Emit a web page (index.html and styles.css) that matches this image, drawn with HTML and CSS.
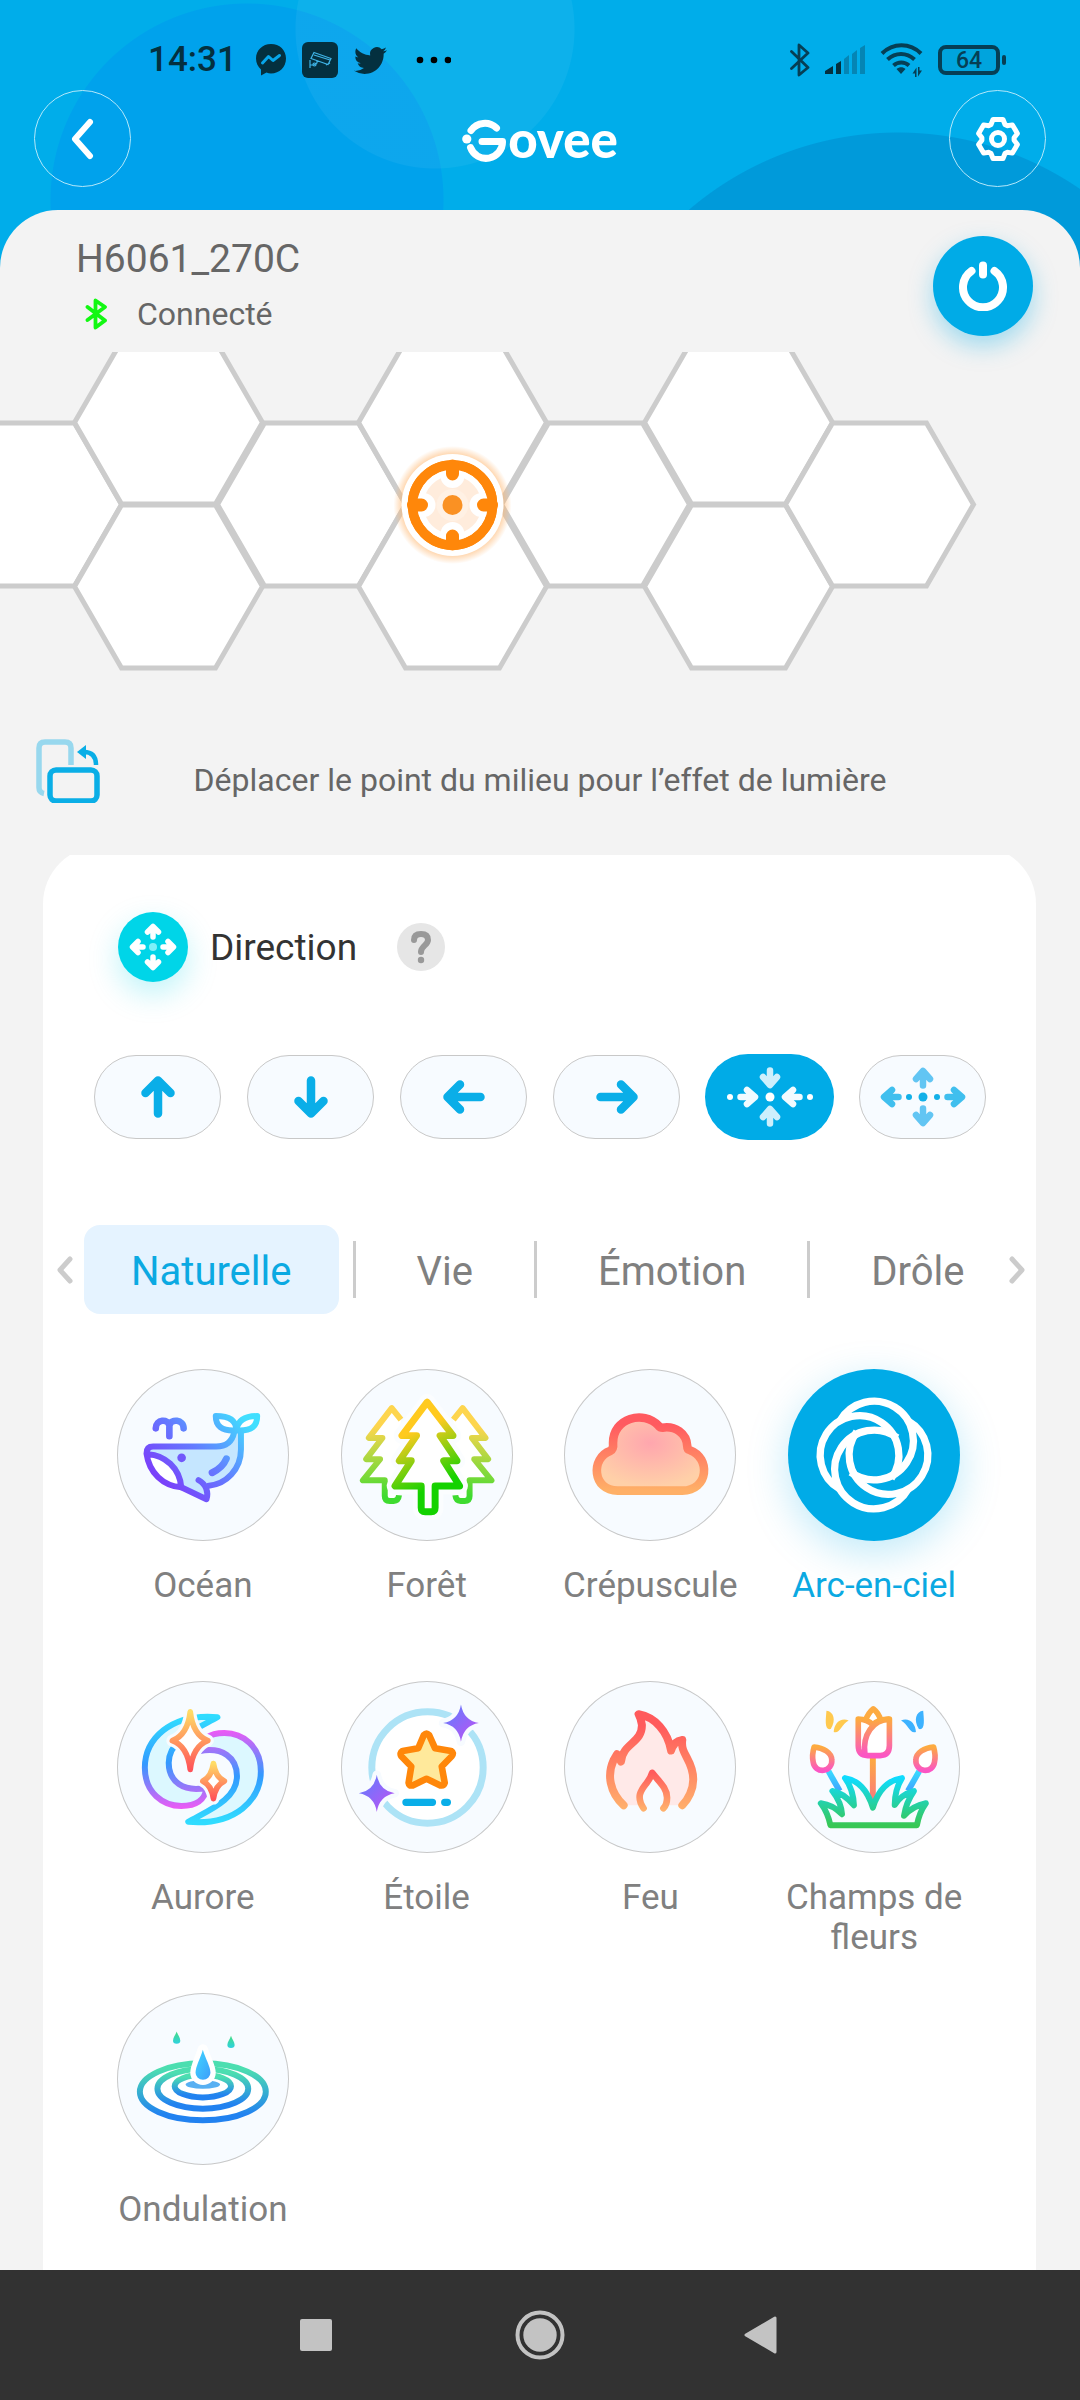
FILE: index.html
```html
<!DOCTYPE html>
<html lang="fr">
<head>
<meta charset="utf-8">
<meta name="viewport" content="width=device-width, initial-scale=1">
<title>Govee – H6061_270C</title>
<link rel="stylesheet" href="styles.css">
</head>
<body>
<div class="app">
  <header class="top">
    <div class="statusbar">
      <div class="status-left">
        <span class="clock">14:31</span>
        <svg width="30" height="32" viewBox="0 0 30 32"><path fill="#04303f" d="M15 0C6.500 0 0 6.300 0 14.500c0 4.500 2 8.300 5 11V31.500l5.500-3A17 17 0 0 0 15 29.500c8.500 0 15-6.500 15-15S23.500 0 15 0z"/><path d="M6.500 19l6-6.500 4.500 4 6.500-5" fill="none" stroke="#07a6ea" stroke-width="3" stroke-linecap="round" stroke-linejoin="round"/></svg>
        <svg width="36" height="36" viewBox="0 0 36 36"><rect width="36" height="36" rx="6" fill="#04303f"/><g fill="none" stroke="#3fb4e6" stroke-width="1.200"><path d="M12 10.500l17 6-3 6-17-6zM12 13l16 5M8 18v8M8 23h4l3-2v-3M24 23l4-2"/><circle cx="12.500" cy="22.500" r="1.500"/></g></svg>
        <svg width="33" height="33" viewBox="0 0 24 24"><path fill="#04303f" d="M23.953 4.570a10 10 0 01-2.825.775 4.958 4.958 0 002.163-2.723c-.951.555-2.005.959-3.127 1.184a4.920 4.920 0 00-8.384 4.482C7.690 8.095 4.067 6.130 1.640 3.162a4.822 4.822 0 00-.666 2.475c0 1.710.870 3.213 2.188 4.096a4.904 4.904 0 01-2.228-.616v.060a4.923 4.923 0 003.946 4.827 4.996 4.996 0 01-2.212.085 4.936 4.936 0 004.604 3.417 9.867 9.867 0 01-6.102 2.105c-.390 0-.779-.023-1.170-.067a13.995 13.995 0 007.557 2.209c9.053 0 13.998-7.496 13.998-13.985 0-.210 0-.420-.015-.630A9.935 9.935 0 0024 4.590z"/></svg>
        <svg class="more" width="36" height="8" viewBox="0 0 36 8"><circle cx="5" cy="4" r="3.300"/><circle cx="19" cy="4" r="3.300"/><circle cx="33" cy="4" r="3.300"/></svg>
      </div>
      <div class="status-right">
        <svg width="20" height="34" viewBox="0 0 20 34"><path d="M1.500 8.500L18 24.500 9 32V2l9 8L1.500 25.500" fill="none" stroke="#063f55" stroke-width="2.800" stroke-linejoin="round" stroke-linecap="round"/></svg>
        <svg width="40" height="30" viewBox="0 0 40 30"><g fill="#04303f"><path d="M0 29v-3l8-5v8zM11 29V19l5-3v13z"/></g><g fill="#0585b4"><path d="M19 29V14l5-4v19zM27 29V9l5-4v24zM35 29V3l5-3v29z"/></g></svg>
        <svg width="43" height="34" viewBox="0 0 43 34"><g fill="none" stroke="#063f55" stroke-width="4"><path d="M2 10.500C13-.500 30-.500 41 10.500M7.500 16.500c8-7.500 19-7.500 27 0M13.500 22.500c4.500-4 11-4 15.500 0"/></g><path fill="#063f55" d="M16.500 26c3-2.500 6.500-2.500 9 0l-4.500 5zM36.500 34v-9.500l-4 6h2.500V34zM38 24v9.500l4-6h-2.500V24z"/></svg>
        <span class="battery"><span class="battery-body">64</span><span class="battery-nub"></span></span>
      </div>
    </div>
    <nav class="appbar" aria-label="Navigation">
      <button class="round-btn" type="button" aria-label="Retour"><svg width="24" height="42" viewBox="0 0 24 42"><path d="M19 4L4 21l15 17" fill="none" stroke="#fff" stroke-width="6" stroke-linecap="round" stroke-linejoin="round"/></svg></button>
      <div class="logo" aria-label="Govee">
        <svg width="46" height="46" viewBox="0 0 46 46"><g fill="none" stroke="#fff" stroke-width="7" stroke-linecap="round" stroke-linejoin="round"><path d="M9 14.500A17 17 0 0 1 34.500 12"/><path d="M8.500 31.500A16.500 16.500 0 0 0 40.500 25.500H20"/></g><circle cx="4.800" cy="23" r="4.600" fill="#fff"/></svg><span>ovee</span>
      </div>
      <button class="round-btn" type="button" aria-label="Réglages"><svg width="48" height="48" viewBox="-24 -24 48 48"><g fill="none" stroke="#fff" stroke-width="5" stroke-linejoin="round"><path d="M-5-19.500H5L7-14.500 9.100-13.300 14.400-14.100 19.400-5.500 16.100-1.200V1.200L19.400 5.500 14.400 14.100 9.100 13.300 7 14.500 5 19.500H-5L-7 14.500-9.100 13.300-14.400 14.100-19.400 5.500-16.100 1.200V-1.200L-19.400-5.500-14.400-14.100-9.100-13.300-7-14.500Z"/><circle r="6.500"/></g></svg></button>
    </nav>
  </header>

  <main class="sheet">
    <section class="device">
      <div class="device-info">
        <h1>H6061_270C</h1>
        <p class="link-state">
          <svg width="22" height="32" viewBox="0 0 22 32"><path d="M2.500 9L20 22.500l-9.500 7V2.500L20 9 2.500 22" fill="none" stroke="#12f812" stroke-width="3.800" stroke-linejoin="round" stroke-linecap="round"/></svg>
          <span>Connecté</span>
        </p>
      </div>
      <button class="power" type="button" aria-label="Allumer ou éteindre"><svg width="50" height="50" viewBox="0 0 50 50"><path d="M13.500 10A20 20 0 1 0 36.500 10M25 4.500v9" fill="none" stroke="#fff" stroke-width="8" stroke-linecap="round"/></svg></button>
    </section>

    <svg class="panels" viewBox="0 352 1080 320" role="img" aria-label="Disposition des panneaux">
      <defs>
        <path id="hex" d="M-94 0L-47-81.400H47L94 0 47 81.400H-47Z" fill="#fff" stroke="#ccc" stroke-width="5"/>
        <radialGradient id="glow"><stop offset=".84" stop-color="#ffb46a" stop-opacity=".6"/><stop offset="1" stop-color="#ffb46a" stop-opacity="0"/></radialGradient>
      </defs>
      <use href="#hex" x="27.500" y="504.500"/>
      <use href="#hex" x="168.500" y="422.500"/><use href="#hex" x="168.500" y="586.500"/>
      <use href="#hex" x="311.500" y="504.500"/>
      <use href="#hex" x="452.500" y="422.500"/><use href="#hex" x="452.500" y="586.500"/>
      <use href="#hex" x="595.500" y="504.500"/>
      <use href="#hex" x="738.500" y="422.500"/><use href="#hex" x="738.500" y="586.500"/>
      <use href="#hex" x="879.500" y="504.500"/>
      <g transform="translate(452.500 505)">
        <circle r="59" fill="url(#glow)"/>
        <circle r="51" fill="#fff"/>
        <circle r="40" fill="#ffecdc" stroke="#ff870a" stroke-width="9.500"/>
        <circle r="32" fill="none" stroke="#fff" stroke-width="6"/>
        <g fill="none" stroke-linecap="round">
          <g stroke="#fff" stroke-width="24"><path d="M0-29v-2M0 29v2M-29 0h-2M29 0h2"/></g>
        </g>
        <circle r="40" fill="none" stroke="#ff870a" stroke-width="9.500"/>
        <g stroke="#ff870a" stroke-width="13" stroke-linecap="round"><path d="M0-31v-8M0 31v8M-31 0h-8M31 0h8"/></g>
        <circle r="16" fill="#fff1e4"/><circle r="10" fill="#fa9123"/>
      </g>
    </svg>

    <div class="hint">
      <button class="rotate" type="button" aria-label="Pivoter"><svg width="64" height="64" viewBox="0 0 64 64"><g fill="none"><path d="M8 54.500q-5-1-5-6V9q0-6 6-6h20q6 0 6 6v17" stroke="#98d8ee" stroke-width="5.500"/><rect x="14" y="31" width="47" height="31" rx="6" stroke="#0aaee6" stroke-width="5.500"/><path d="M48 13q12 0 12 13" stroke="#0aaee6" stroke-width="4.500"/></g><path fill="#0aaee6" d="M41 13l9-7v14z"/></svg></button>
      <p>Déplacer le point du milieu pour l’effet de lumière</p>
    </div>

    <div class="clip">
      <section class="card">
        <div class="direction">
          <span class="badge"><svg width="50" height="50" viewBox="-25 -25 50 50"><defs><path id="mini" d="M10 0H19.500M15-5.500L20.500 0 15 5.500" fill="none" stroke="#fff" stroke-width="5.500" stroke-linecap="round" stroke-linejoin="round"/></defs><use href="#mini"/><use href="#mini" transform="rotate(90)"/><use href="#mini" transform="rotate(180)"/><use href="#mini" transform="rotate(270)"/><circle r="4" fill="#7ff0f8"/></svg></span>
          <h2>Direction</h2>
          <button class="help" type="button" aria-label="Aide"><svg width="24" height="34" viewBox="0 0 24 34"><path d="M5 10q0-6 7-6t7 6c0 5-7 6-7 12" fill="none" stroke="#999" stroke-width="6" stroke-linecap="round"/><circle cx="12" cy="30" r="3.200" fill="#999"/></svg></button>
        </div>

        <svg width="0" height="0" class="defs"><defs>
          <path id="arrow" d="M-16.500 0H16M4-12.500L16.500 0 4 12.500" fill="none" stroke="#0aaee8" stroke-width="8.500" stroke-linecap="round" stroke-linejoin="round"/>
          <path id="small" d="M-7.500 0H6M-1-7L7 0-1 7" fill="none" stroke-width="6.500" stroke-linecap="round" stroke-linejoin="round"/>
        </defs></svg>
        <div class="pills">
          <button type="button" aria-label="Haut"><svg viewBox="-46 -32 92 64"><use href="#arrow" transform="rotate(-90)"/></svg></button>
          <button type="button" aria-label="Bas"><svg viewBox="-46 -32 92 64"><use href="#arrow" transform="rotate(90)"/></svg></button>
          <button type="button" aria-label="Gauche"><svg viewBox="-46 -32 92 64"><use href="#arrow" transform="rotate(180)"/></svg></button>
          <button type="button" aria-label="Droite"><svg viewBox="-46 -32 92 64"><use href="#arrow"/></svg></button>
          <button type="button" class="on" aria-pressed="true" aria-label="Vers le centre"><svg viewBox="-46 -32 92 64"><g stroke="#cdeffc"><use href="#small" transform="translate(0 -19) rotate(90)"/><use href="#small" transform="translate(0 19) rotate(-90)"/></g><g stroke="#f1fbff"><use href="#small" x="-22"/><use href="#small" transform="translate(22 0) rotate(180)"/></g><g fill="#fff"><circle r="4.500"/><circle cx="-40" r="3"/><circle cx="40" r="3"/></g></svg></button>
          <button type="button" aria-label="Vers l’extérieur"><svg viewBox="-46 -32 92 64"><g stroke="#62c5f3"><use href="#small" transform="translate(0 -19) rotate(-90)"/><use href="#small" transform="translate(0 19) rotate(90)"/></g><g stroke="#40bfee"><use href="#small" x="32"/><use href="#small" transform="translate(-32 0) rotate(180)"/></g><g fill="#12b0e8"><circle r="4.500"/><circle cx="-14" r="3"/><circle cx="14" r="3"/></g></svg></button>
        </div>

        <div class="tabs">
          <button class="scroll" type="button" aria-label="Précédent"><svg width="16" height="28" viewBox="0 0 16 28"><path d="M13 3L3 14l10 11" fill="none" stroke="#ccc" stroke-width="5" stroke-linecap="round" stroke-linejoin="round"/></svg></button>
          <div class="tablist" role="tablist">
            <button type="button" role="tab" aria-selected="true">Naturelle</button>
            <span class="divider"></span>
            <button type="button" role="tab" aria-selected="false">Vie</button>
            <span class="divider"></span>
            <button type="button" role="tab" aria-selected="false">Émotion</button>
            <span class="divider"></span>
            <button type="button" role="tab" aria-selected="false">Drôle</button>
          </div>
          <button class="scroll" type="button" aria-label="Suivant"><svg width="16" height="28" viewBox="0 0 16 28"><path d="M3 3l10 11L3 25" fill="none" stroke="#ccc" stroke-width="5" stroke-linecap="round" stroke-linejoin="round"/></svg></button>
        </div>

        <div class="scenes">
          <button class="scene" type="button">
            <span class="disc"><svg viewBox="81 57 519 519">
              <defs><linearGradient id="sea" gradientUnits="userSpaceOnUse" x1="470" y1="210" x2="250" y2="430"><stop stop-color="#41dfff"/><stop offset=".55" stop-color="#6479ff"/><stop offset="1" stop-color="#7a40fa"/></linearGradient></defs>
              <path fill="#c5e6ff" d="M172 296H380Q425 291 440 245H455V300C455 360 410 405 358 410L350 450 275 415C270 355 225 315 172 315Z"/>
              <path fill="#fff" d="M172 315C225 315 270 355 274 413 220 410 178 370 172 315Z"/>
              <g fill="none" stroke="url(#sea)" stroke-width="18" stroke-linecap="round" stroke-linejoin="round">
                <path d="M198 236C198 208 236 206 239 228V260M239 228C243 206 282 208 282 236" stroke-width="20"/>
                <path d="M441 240C440 215 425 199 379 199 379 228 395 245 441 242ZM441 240C446 212 470 199 504 199 504 228 490 245 441 242Z" fill="#fff"/>
                <path d="M434 250C428 278 408 291 380 291H190Q170 291 170 312C178 370 220 410 275 414 270 355 225 317 175 314"/>
                <path d="M275 414L351 450C358 430 350 404 327 392M455 248V300C455 360 410 405 358 409"/>
                <path d="M411 328Q400 355 368 370" stroke-width="21"/>
              </g>
              <circle cx="276" cy="325" r="13" fill="#7158fb"/>
            </svg></span>
            <span class="label">Océan</span>
          </button>
          <button class="scene" type="button">
            <span class="disc"><svg viewBox="754 57 519 519">
              <defs>
                <linearGradient id="tree" gradientUnits="userSpaceOnUse" x1="985" y1="240" x2="1060" y2="400"><stop stop-color="#ffca1f"/><stop offset="1" stop-color="#14d200"/></linearGradient>
                <linearGradient id="tree2" gradientUnits="userSpaceOnUse" x1="870" y1="230" x2="895" y2="440"><stop stop-color="#fdd54e"/><stop offset="1" stop-color="#3fdb30"/></linearGradient>
                <path id="side" d="M935 210L907 175 838 265H879L830 329H872L820 393H886V440Q886 455 901 455H913Q927 455 929 438"/>
              </defs>
              <g fill="#fff" stroke="url(#tree2)" stroke-width="18" stroke-linejoin="round"><use href="#side"/><use href="#side" transform="matrix(-1 0 0 1 2028 0)"/></g>
              <path fill="#fff" stroke="#fbfdff" stroke-width="50" stroke-linejoin="round" d="M1014 157L938 258H982L930 334H966L917 410H996V476Q996 488 1008 488H1026Q1038 488 1038 476V410H1112L1064 334H1104L1053 258H1092Z"/>
              <path fill="#fff" stroke="url(#tree)" stroke-width="21" stroke-linejoin="round" d="M1014 157L938 258H982L930 334H966L917 410H996V476Q996 488 1008 488H1026Q1038 488 1038 476V410H1112L1064 334H1104L1053 258H1092Z"/>
            </svg></span>
            <span class="label">Forêt</span>
          </button>
          <button class="scene" type="button">
            <span class="disc"><svg viewBox="75 57 519 519">
              <defs>
                <linearGradient id="dusk" x1="0" y1="0" x2="0" y2="1"><stop offset=".1" stop-color="#ff5a60"/><stop offset="1" stop-color="#ffb067"/></linearGradient>
                <radialGradient id="duskfill" cx=".5" cy=".35" r=".6"><stop stop-color="#ffa6ae"/><stop offset="1" stop-color="#ffd0a8"/></radialGradient>
              </defs>
              <path fill="url(#duskfill)" stroke="url(#dusk)" stroke-width="26" stroke-linejoin="round" d="M237 424H432C512 424 518 325 455 302Q447 300 447 290C445 250 410 228 372 234Q365 234 360 228C315 180 223 205 223 280Q225 298 215 304C155 325 160 424 237 424Z"/>
            </svg></span>
            <span class="label">Crépuscule</span>
          </button>
          <button class="scene on" type="button" aria-pressed="true">
            <span class="disc"><svg viewBox="-259 -259 518 518"><defs><path id="loop" d="M-102.700-102.700A118.500 118.500 0 1 1-70 52" fill="none" stroke="#fff" stroke-width="22"/></defs><use href="#loop"/><use href="#loop" transform="rotate(90)"/><use href="#loop" transform="rotate(180)"/><use href="#loop" transform="rotate(270)"/></svg></span>
            <span class="label">Arc-en-ciel</span>
          </button>
          <button class="scene" type="button">
            <span class="disc"><svg viewBox="81 63 519 519">
              <defs>
                <linearGradient id="aurora" gradientUnits="userSpaceOnUse" x1="250" y1="175" x2="260" y2="445"><stop stop-color="#30dcff"/><stop offset=".5" stop-color="#3399ff"/><stop offset="1" stop-color="#e85cf5"/></linearGradient>
                <linearGradient id="spark" x1="0" y1="0" x2="0" y2="1"><stop stop-color="#ffdc66"/><stop offset="1" stop-color="#ff5358"/></linearGradient>
                <path id="swirl" d="M384 172C240 160 165 240 165 325 165 400 220 440 275 440 320 440 345 425 352 385 280 400 237 365 237 310 237 240 320 208 384 172Z" fill="#dcf8ff" stroke="url(#aurora)" stroke-width="18" stroke-linejoin="round"/>
                <path id="bigstar" d="M302 156Q310 225 355 243 310 260 302 330 294 260 248 243 294 225 302 156Z"/>
                <path id="smallstar" d="M372 312Q378 353 405 365 378 377 372 418 366 377 340 365 366 353 372 312Z"/>
              </defs>
              <use href="#swirl"/><use href="#swirl" transform="rotate(180 340 330)"/>
              <g fill="#fff" stroke="#f7fbff" stroke-width="36" stroke-linejoin="round"><use href="#bigstar"/><use href="#smallstar"/></g>
              <g fill="#fff" stroke="url(#spark)" stroke-width="17" stroke-linejoin="round"><use href="#bigstar"/><use href="#smallstar"/></g>
            </svg></span>
            <span class="label">Aurore</span>
          </button>
          <button class="scene" type="button">
            <span class="disc"><svg viewBox="754 63 519 519">
              <defs>
                <linearGradient id="violet" x1="0" y1="0" x2="1" y2="1"><stop stop-color="#5a80ff"/><stop offset="1" stop-color="#c44ff2"/></linearGradient>
                <path id="twinkle" d="M0-56Q8-8 54 0 8 8 0 56-8 8-54 0-8-8 0-56Z"/>
              </defs>
              <circle cx="1015" cy="324" r="168" fill="#fff" stroke="#ade3f6" stroke-width="21"/>
              <g fill="#f7fbff" stroke="#f7fbff" stroke-width="26" stroke-linejoin="round"><use href="#twinkle" x="1116" y="190"/><use href="#twinkle" x="862" y="402"/></g>
              <g fill="url(#violet)"><use href="#twinkle" x="1116" y="190"/><use href="#twinkle" x="862" y="402"/></g>
              <path fill="#ffe99b" stroke="#ff870a" stroke-width="20" stroke-linejoin="round" d="M1004 226Q1012 218 1020 226L1038 266 1086 274Q1096 280 1088 290L1058 321 1067 370Q1064 380 1054 378L1012 358 970 378Q960 380 958 370L966 321 936 290Q930 280 940 274L987 266Z"/>
              <path d="M950 429H1030M1067 429H1075" stroke="#0aaee8" stroke-width="22" stroke-linecap="round"/>
            </svg></span>
            <span class="label">Étoile</span>
          </button>
          <button class="scene" type="button">
            <span class="disc"><svg viewBox="75 63 519 519">
              <defs><linearGradient id="fire" gradientUnits="userSpaceOnUse" x1="0" y1="200" x2="0" y2="450"><stop stop-color="#ff5a5c"/><stop offset="1" stop-color="#ffb06c"/></linearGradient><linearGradient id="fire2" gradientUnits="userSpaceOnUse" x1="0" y1="340" x2="0" y2="450"><stop stop-color="#ff5a5c"/><stop offset="1" stop-color="#ffb06c"/></linearGradient></defs>
              <path fill="#ffe9e8" stroke="url(#fire)" stroke-width="24" stroke-linecap="round" stroke-linejoin="round" d="M255 438C212 398 205 345 224 303L235 284 247 306C252 250 312 250 310 195Q308 178 300 163C350 172 388 215 398 273 404 252 418 243 432 241 425 285 465 300 465 360 465 390 450 420 432 438"/>
              <path fill="#f7fbff" stroke="url(#fire2)" stroke-width="20" stroke-linecap="round" stroke-linejoin="round" d="M315 447C290 410 310 390 325 370Q338 352 341 340C360 365 386 385 386 415Q386 435 375 447"/>
            </svg></span>
            <span class="label">Feu</span>
          </button>
          <button class="scene" type="button">
            <span class="disc"><svg viewBox="744 63 519 519">
              <defs>
                <linearGradient id="tulip" x1="0" y1="0" x2="0" y2="1"><stop stop-color="#fdab3f"/><stop offset="1" stop-color="#fb55c4"/></linearGradient>
                <linearGradient id="stem" gradientUnits="userSpaceOnUse" x1="0" y1="295" x2="0" y2="420"><stop stop-color="#fdab3f"/><stop offset="1" stop-color="#fb7b7b"/></linearGradient>
                <linearGradient id="stem2" gradientUnits="userSpaceOnUse" x1="0" y1="335" x2="0" y2="400"><stop stop-color="#38dcff"/><stop offset="1" stop-color="#3f9dff"/></linearGradient>
                <linearGradient id="grass" x1="0" y1="0" x2="0" y2="1"><stop stop-color="#0fdcff"/><stop offset="1" stop-color="#38c755"/></linearGradient>
                <g id="bud"><path d="M866 335L900 395" stroke="url(#stem2)" stroke-width="18"/><path d="M823 262C850 264 876 280 876 301A28 28 0 0 1 820 308C816 290 819 275 823 262Z" fill="#fff" stroke="url(#tulip)" stroke-width="17" stroke-linejoin="round"/></g>
                <path id="fly" d="M860 153C882 155 890 182 873 208 853 212 858 180 860 153ZM927 182C903 172 883 190 882 217 900 224 905 193 927 182Z"/>
              </defs>
              <use href="#fly" fill="#ffc94f"/><use href="#fly" fill="#3db2ff" transform="matrix(-1 0 0 1 2012 0)"/>
              <use href="#bud"/><use href="#bud" transform="matrix(-1 0 0 1 2006 0)"/>
              <path d="M1000 295V430" stroke="url(#stem)" stroke-width="18"/>
              <g fill="#fff" stroke="url(#tulip)" stroke-width="17" stroke-linejoin="round"><path stroke="#fdab42" d="M978 182Q985 160 1001 147 1018 160 1024 182"/><path d="M956 178C975 178 990 185 1000 195 1015 180 1035 178 1050 178V258Q1050 288 1022 288H984Q956 288 956 258Z"/><path d="M1050 178C1000 180 968 225 976 284" fill="none"/></g>
              <path fill="#f7fbff" stroke="url(#grass)" stroke-width="18" stroke-linejoin="round" d="M872 498Q864 460 843 432 880 437 907 465 905 430 878 395 910 400 943 438 941 390 916 356 975 365 1000 445 1025 365 1088 356 1066 390 1066 437 1085 405 1124 395 1100 430 1094 470 1120 440 1160 432 1140 460 1133 498Z"/>
            </svg></span>
            <span class="label">Champs de fleurs</span>
          </button>
          <button class="scene" type="button">
            <span class="disc"><svg viewBox="81 69 519 519">
              <defs>
                <linearGradient id="wave" x1="0" y1="0" x2="0" y2="1"><stop offset=".1" stop-color="#4cdeb0"/><stop offset=".9" stop-color="#2282f0"/></linearGradient>
                <linearGradient id="drop" x1="0" y1="0" x2="1" y2="1"><stop stop-color="#40d8ff"/><stop offset="1" stop-color="#3d9dfb"/></linearGradient>
                <linearGradient id="drip" x1="0" y1="0" x2="0" y2="1"><stop stop-color="#45dc82"/><stop offset="1" stop-color="#2fd2e0"/></linearGradient>
                <path id="tear" d="M0-18C3-8 11 0 11 10A11 9 0 0 1-11 10C-11 0-3-8 0-18Z"/>
              </defs>
              <g fill="#fff" stroke="url(#wave)" stroke-width="18"><ellipse cx="340" cy="367" rx="190" ry="86"/><ellipse cx="340" cy="358" rx="137" ry="60"/><ellipse cx="340" cy="350" rx="85" ry="34"/></g>
              <ellipse cx="340" cy="345" rx="52" ry="13" fill="#58b0f2"/>
              <path fill="url(#drop)" stroke="#fff" stroke-width="32" stroke-linejoin="round" paint-order="stroke" d="M340 240C348 268 363 290 363 310A22 20 0 0 1 318 310C318 290 332 268 340 240Z"/>
              <g fill="url(#drip)"><use href="#tear" x="261" y="203"/><use href="#tear" x="425" y="216"/></g>
            </svg></span>
            <span class="label">Ondulation</span>
          </button>
        </div>
      </section>
    </div>
  </main>

  <nav class="sysnav" aria-label="Système">
    <button type="button" aria-label="Applications récentes"><svg width="72" height="72" viewBox="-36 -36 72 72"><rect x="-16" y="-16" width="32" height="32" rx="2" fill="#c3c3c3"/></svg></button>
    <button type="button" aria-label="Accueil"><svg width="72" height="72" viewBox="-36 -36 72 72"><circle r="22.500" fill="none" stroke="#c3c3c3" stroke-width="4"/><circle r="16.700" fill="#c3c3c3"/></svg></button>
    <button type="button" aria-label="Retour système"><svg width="72" height="72" viewBox="-36 -36 72 72"><path d="M-18 0L11-17V17Z" fill="#c3c3c3" stroke="#c3c3c3" stroke-width="3" stroke-linejoin="round"/></svg></button>
  </nav>
</div>
</body>
</html>
```
FILE: styles.css
```css
* {
  box-sizing: border-box;
}

body {
  margin: 0;
  font-family: Roboto, "Noto Sans", sans-serif;
  color: #666;
  background: #323232;
}

h1,
h2,
p {
  margin: 0;
  font-weight: 400;
}

button {
  margin: 0;
  padding: 0;
  border: 0;
  background: none;
  font: inherit;
  color: inherit;
  cursor: pointer;
}

svg {
  display: block;
}

.defs {
  position: absolute;
}

.app {
  display: flex;
  flex-direction: column;
  min-height: 100vh;
  background:
    radial-gradient(circle 140px at 435px 29px, rgba(255, 255, 255, 0.05) 139px, transparent 140px),
    radial-gradient(circle 197px at 247px 200px, #00a2ec 196px, transparent 197px),
    radial-gradient(circle 322px at calc(100% - 182px) 454px, #009ada 321px, transparent 322px),
    #00adea;
}

/* Status bar and app bar */

.top {
  padding: 42px 34px 23px;
}

.statusbar {
  display: flex;
  justify-content: space-between;
  height: 36px;
  margin-bottom: 12px;
  padding: 0 40px 0 114px;
}

.status-left,
.status-right {
  display: flex;
  align-items: center;
  gap: 16px;
}

.status-right {
  gap: 15px;
}

.clock {
  width: 92px;
  font-size: 35px;
  font-weight: 500;
  line-height: 36px;
  color: #04303f;
}

.more {
  margin-left: 12px;
}

.battery {
  display: flex;
  align-items: center;
  gap: 2px;
}

.battery-body {
  width: 62px;
  height: 30px;
  border: 4px solid #063f55;
  border-radius: 8px;
  background: #00a4dd;
  font-size: 23px;
  font-weight: 500;
  line-height: 23px;
  text-align: center;
  color: #063f55;
}

.battery-nub {
  width: 4px;
  height: 10px;
  border-radius: 2px;
  background: #063f55;
}

.appbar {
  display: flex;
  align-items: center;
  justify-content: space-between;
}

.round-btn {
  display: grid;
  place-items: center;
  width: 97px;
  height: 97px;
  border: 1px solid #b4e8fa;
  border-radius: 50%;
}

.logo {
  display: flex;
  align-items: center;
  color: #fff;
  font-family: Lato, sans-serif;
  font-size: 51px;
  font-weight: 900;
  line-height: 46px;
}

/* Device sheet */

.sheet {
  flex: 1;
  display: flex;
  flex-direction: column;
  border-radius: 58px 58px 0 0;
  background: #f3f3f3;
}

.device {
  display: flex;
  justify-content: space-between;
  align-items: flex-start;
  padding: 26px 47px 16px 76px;
}

.device-info {
  display: flex;
  flex-direction: column;
  gap: 12px;
}

h1 {
  font-size: 39px;
  line-height: 46px;
}

.link-state {
  display: flex;
  align-items: center;
  gap: 30px;
  padding-left: 9px;
  font-size: 32px;
  line-height: 40px;
}

.power {
  display: grid;
  place-items: center;
  width: 100px;
  height: 100px;
  border-radius: 50%;
  background: #00abe7;
  box-shadow: 0 10px 24px rgba(0, 171, 231, 0.35);
}

.panels {
  width: 100%;
  height: auto;
}

.hint {
  display: grid;
  grid-template-columns: 1fr auto 1fr;
  align-items: end;
  padding: 67px 36px 52px;
}

.rotate {
  justify-self: start;
}

.hint p {
  font-size: 32px;
  line-height: 46px;
}

/* Settings card, its top edge slips under the area above */

.clip {
  flex: 1;
  display: flex;
  margin: 0 44px 0 43px;
  overflow: hidden;
}

.card {
  flex: 1;
  min-width: 0;
  margin-top: -9px;
  padding-top: 66px;
  border-radius: 58px 58px 0 0;
  background: #fff;
}

.direction {
  display: flex;
  align-items: center;
  padding-left: 75px;
}

.badge {
  display: grid;
  place-items: center;
  width: 70px;
  height: 70px;
  margin-right: 22px;
  border-radius: 50%;
  background: #00d5e8;
  box-shadow: 0 12px 30px rgba(0, 213, 232, 0.25);
}

h2 {
  padding-top: 2px;
  font-size: 37px;
  line-height: 42px;
  color: #333;
}

.help {
  display: grid;
  place-items: center;
  width: 48px;
  height: 48px;
  margin-left: 40px;
  border-radius: 50%;
  background: #e6e6e6;
}

.pills {
  display: grid;
  grid-template-columns: repeat(6, 1fr);
  gap: 26px;
  padding: 73px 50px 86px 51px;
}

.pills button {
  display: grid;
  place-items: center;
  height: 84px;
  border: 1px solid #c8c8c8;
  border-radius: 42px;
  background: #f7fbff;
}

.pills svg {
  width: 92px;
  height: 64px;
}

.pills .on {
  border-color: #00abe7;
  background: #00abe7;
  box-shadow: 0 0 0 1px #00abe7;
}

.tabs {
  display: flex;
  align-items: center;
  gap: 11px;
  padding: 0 11px 0 14px;
}

.scroll {
  flex: none;
}

.tablist {
  flex: 1;
  display: flex;
  align-items: center;
  gap: 14px;
  overflow: hidden;
}

.tablist button {
  flex: none;
  height: 89px;
  padding: 3px 47px 0;
  border-radius: 16px;
  font-size: 40px;
  color: #808080;
}

.divider {
  flex: none;
  width: 3px;
  height: 57px;
  background: #ccc;
}

.tablist [aria-selected="true"] {
  background: #e5f3ff;
  color: #0ba9e2;
}

.scenes {
  display: grid;
  grid-template-columns: repeat(4, 1fr);
  grid-auto-rows: minmax(277px, auto);
  row-gap: 35px;
  padding: 55px 50px 0 48px;
}

.scene {
  display: flex;
  flex-direction: column;
  align-items: center;
  gap: 25px;
  color: #808080;
}

.disc {
  width: 172px;
  height: 172px;
  border-radius: 50%;
  background: #f7fbff;
  box-shadow: inset 0 0 0 1px #c8c8c8;
}

.label {
  max-width: 200px;
  font-size: 35px;
  line-height: 40px;
}

.scene.on {
  color: #0ba9e2;
}

.scene.on .disc {
  background: #00abe7;
  box-shadow: 0 12px 40px rgba(0, 171, 231, 0.25);
}

/* System navigation */

.sysnav {
  display: flex;
  justify-content: center;
  gap: 152px;
  padding: 29px 0;
  background: #323232;
}
```
